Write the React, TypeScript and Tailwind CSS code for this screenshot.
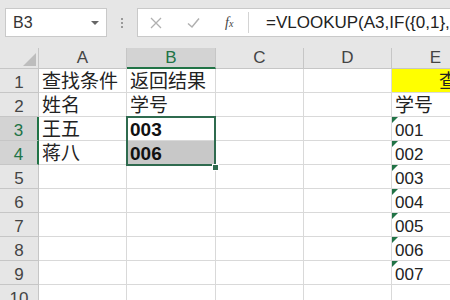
import React from 'react';

type Cell = { text?: string; bold?: boolean; flag?: boolean; shade?: boolean };

const cols = ['A', 'B', 'C', 'D', 'E'];

const rows: Cell[][] = [
  [{ text: '查找条件' }, { text: '返回结果' }, {}, {}, {}],
  [{ text: '姓名' }, { text: '学号' }, {}, {}, { text: '学号' }],
  [{ text: '王五' }, { text: '003', bold: true }, {}, {}, { text: '001', flag: true }],
  [{ text: '蒋八' }, { text: '006', bold: true, shade: true }, {}, {}, { text: '002', flag: true }],
  [{}, {}, {}, {}, { text: '003', flag: true }],
  [{}, {}, {}, {}, { text: '004', flag: true }],
  [{}, {}, {}, {}, { text: '005', flag: true }],
  [{}, {}, {}, {}, { text: '006', flag: true }],
  [{}, {}, {}, {}, { text: '007', flag: true }],
  [{}, {}, {}, {}, {}],
];

export default function App() {
  return (
    <div className="w-[450px] h-[300px] overflow-hidden bg-white font-['Liberation_Sans','Noto_Sans_CJK_SC',sans-serif] text-[#222]">
      {/* 名称框 + 编辑栏 */}
      <div className="h-[48px] bg-[#e6e6e6] flex items-start pt-[8px] pl-[5px]">
        <div className="w-[102px] h-[29px] bg-white border border-[#c9c9c9] flex items-center justify-between pl-[7px] pr-[7px]">
          <span className="text-[16px] text-[#333]">B3</span>
          <span className="w-0 h-0 border-l-[4px] border-l-transparent border-r-[4px] border-r-transparent border-t-[4px] border-t-[#666]" />
        </div>
        <div className="w-[30px] h-[29px] flex flex-col items-center justify-center gap-[2px]">
          <span className="w-[2px] h-[2px] bg-[#999]" />
          <span className="w-[2px] h-[2px] bg-[#999]" />
          <span className="w-[2px] h-[2px] bg-[#999]" />
        </div>
        <div className="flex-1 h-[29px] bg-white border border-[#c9c9c9] border-r-0 flex items-center">
          <div className="w-[110px] flex items-center pl-[12px] gap-[25px] text-[#b0b0b0]">
            <svg width="12" height="12" viewBox="0 0 12 12" stroke="currentColor" strokeWidth="1.3">
              <path d="M1 1L11 11M11 1L1 11" />
            </svg>
            <svg width="13" height="12" viewBox="0 0 13 12" fill="none" stroke="currentColor" strokeWidth="1.5">
              <path d="M1 6.5L5 10L12 1.5" />
            </svg>
            <span className="text-[14px] italic font-['Liberation_Serif',serif] text-[#444]">f<span className="text-[10px]">x</span></span>
          </div>
          <div className="w-px h-[21px] bg-[#d4d4d4]" />
          <span className="pl-[17px] text-[17px] text-[#222] whitespace-nowrap">{'=VLOOKUP(A3,IF({0,1},'}</span>
        </div>
      </div>

      {/* 表格 */}
      <div className="relative">
        <div className="grid grid-cols-[39px_88px_89px_88px_88px_88px]">
          <div className="h-[21px] bg-[#e6e6e6] border-r border-b border-[#c6c6c6] flex items-end justify-end p-[2px]">
            <span className="w-0 h-0 border-l-[13px] border-l-transparent border-b-[13px] border-b-[#bdbdbd]" />
          </div>
          {cols.map((c) => (
            <div
              key={c}
              className={
                c === 'B'
                  ? 'h-[21px] bg-[#d3d3d3] border-r border-[#c6c6c6] border-b-2 border-b-[#217346] flex items-center justify-center text-[17px] text-[#217346]'
                  : 'h-[21px] bg-[#e6e6e6] border-r border-b border-[#c6c6c6] flex items-center justify-center text-[17px] text-[#444]'
              }
            >
              {c}
            </div>
          ))}

          {rows.map((r, i) => {
            const sel = i === 2 || i === 3;
            return (
              <React.Fragment key={i}>
                <div
                  className={
                    sel
                      ? 'h-[24px] bg-[#d3d3d3] border-b border-[#c6c6c6] border-r-2 border-r-[#217346] flex items-end justify-center text-[17px] leading-[19px] text-[#217346]'
                      : 'h-[24px] bg-[#e6e6e6] border-r border-b border-[#c6c6c6] flex items-end justify-center text-[17px] leading-[19px] text-[#444]'
                  }
                >
                  {i + 1}
                </div>
                {r.map((c, j) => {
                  const yellow = i === 0 && j === 4;
                  const num = !!c.text && /^\d+$/.test(c.text);
                  return (
                    <div
                      key={j}
                      className={
                        'relative h-[24px] border-b border-r border-[#d9d9d9] flex items-end overflow-hidden whitespace-nowrap ' +
                        (c.shade ? 'bg-[#c8c8c8] ' : '') +
                        (yellow ? 'bg-[#ffff00] ' : '') +
                        (c.bold
                          ? 'font-bold text-[19px] leading-[20px] pl-[3px] text-[#111] '
                          : num
                            ? 'text-[17px] leading-[19px] pl-[3px] '
                            : 'text-[19px] leading-[20px] pl-[3px] ')
                      }
                    >
                      {c.flag && (
                        <span className="absolute left-0 top-0 w-0 h-0 border-t-[6px] border-t-[#217346] border-r-[6px] border-r-transparent" />
                      )}
                      {yellow ? <span className="pl-[44px]">查询表</span> : c.text}
                    </div>
                  );
                })}
              </React.Fragment>
            );
          })}
        </div>

        {/* 选区 B3:B4 */}
        <div className="absolute left-[126px] top-[68px] w-[90px] h-[50px] border-2 border-[#2f6b4f] pointer-events-none" />
        <div className="absolute left-[212px] top-[116px] w-[7px] h-[7px] bg-[#2f6b4f] border border-white" />
      </div>
    </div>
  );
}
